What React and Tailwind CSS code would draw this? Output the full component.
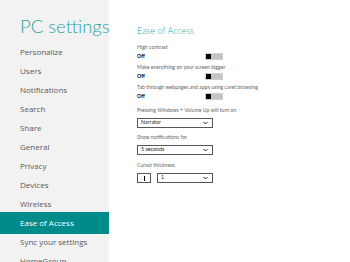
import React from "react";

const navItems = [
  "Personalize",
  "Users",
  "Notifications",
  "Search",
  "Share",
  "General",
  "Privacy",
  "Devices",
  "Wireless",
  "Ease of Access",
  "Sync your settings",
  "HomeGroup",
];

// small windows 8 style toggle, always "Off" here
const Toggle = () => (
  <div className="flex h-[7px] w-[18px] bg-[#c4c4c4] border border-[#d0d0d0]">
    <div className="h-full w-[5px] bg-black" />
  </div>
);

const Chevron = () => (
  <svg width="5" height="4" viewBox="0 0 5 4" className="shrink-0">
    <polyline points="0.5,1 2.5,3 4.5,1" fill="none" stroke="#222" strokeWidth="1" />
  </svg>
);

const Select = ({ value, width }) => (
  <div
    className={`flex h-[10px] items-center justify-between border border-[#555] bg-white pl-[3px] pr-[4px] ${width}`}
  >
    <span className="text-[5.3px] leading-none text-[#222]">{value}</span>
    <Chevron />
  </div>
);

const ToggleSetting = ({ label, first }) => (
  <div className={first ? "mt-[7px]" : "mt-[3px]"}>
    <div className="flex h-[8px] items-center text-[5.2px] text-[#666]">{label}</div>
    <div className="flex h-[9px] items-center">
      <span className="w-[68px] text-[5.3px] font-bold text-black">Off</span>
      <Toggle />
    </div>
  </div>
);

export default function App() {
  return (
    <div className="flex h-[262px] w-[350px] overflow-hidden bg-white font-['Lato','Open_Sans',sans-serif]">
      {/* left navigation */}
      <aside className="w-[109px] shrink-0 bg-[#f2f2f2]">
        <h1 className="mt-[15px] h-[22px] pl-[20px] text-[18.5px] font-light leading-[22px] text-[#2da3a2] whitespace-nowrap">
          PC settings
        </h1>
        <ul className="mt-[5px] font-['Open_Sans',sans-serif]">
          {navItems.map((item) =>
            item === "Ease of Access" ? (
              <li
                key={item}
                className="-mb-[2px] -mt-[1px] flex h-[22px] items-center bg-[#008b8b] pl-[20px] text-[8px] text-white"
              >
                {item}
              </li>
            ) : (
              <li key={item} className="flex h-[19px] items-center pl-[20px] text-[8px] text-[#5a5a5a]">
                {item}
              </li>
            )
          )}
        </ul>
      </aside>

      {/* settings pane */}
      <main className="flex-1 pl-[28px]">
        <h2 className="mt-[25px] h-[12px] text-[9px] font-light leading-[12px] text-[#2da3a2]">
          Ease of Access
        </h2>
        <ToggleSetting label="High contrast" first />
        <ToggleSetting label="Make everything on your screen bigger" />
        <ToggleSetting label="Tab through webpages and apps using caret browsing" />

        <div className="mt-[6px] flex h-[8px] items-center text-[5.2px] text-[#666]">
          Pressing Windows + Volume Up will turn on
        </div>
        <div className="mt-[3px]">
          <Select value="Narrator" width="w-[76px]" />
        </div>

        <div className="mt-[6px] flex h-[8px] items-center text-[5.2px] text-[#666]">
          Show notifications for
        </div>
        <div className="mt-[3px]">
          <Select value="5 seconds" width="w-[76px]" />
        </div>

        <div className="mt-[7px] flex h-[8px] items-center text-[5.2px] text-[#666]">Cursor thickness</div>
        <div className="mt-[3px] flex items-center gap-[6px]">
          <div className="flex h-[10px] w-[14px] items-center justify-center border border-[#555] bg-white">
            <div className="h-[5px] w-px bg-black" />
          </div>
          <Select value="1" width="w-[56px]" />
        </div>
      </main>
    </div>
  );
}
